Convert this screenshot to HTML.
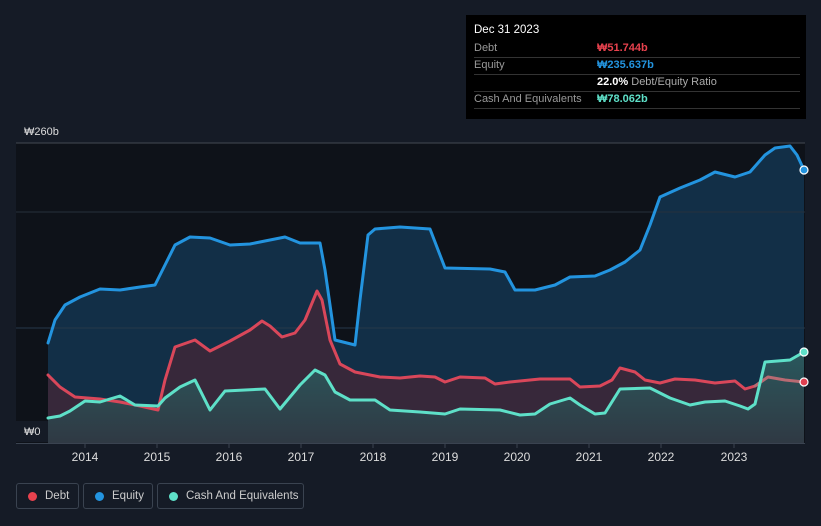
<!DOCTYPE html>
<html><head><meta charset="utf-8"><style>
body{margin:0;background:#151b26;width:821px;height:526px;overflow:hidden;font-family:"Liberation Sans","Noto Sans CJK KR",sans-serif;}
.tt{position:absolute;left:466px;top:15px;width:340px;height:104px;background:#000;color:#fff;font-size:11px;}
.tt .r{position:absolute;left:8px;right:6px;height:17px;line-height:17px;border-bottom:1px solid #333;white-space:nowrap;}
.tt .v{position:absolute;left:123px;font-weight:bold;}
.lab{color:#999;}
.leg{position:absolute;top:483px;height:26px;border:1px solid #3a4350;border-radius:3px;color:#ccc;font-size:11.5px;line-height:24px;box-sizing:border-box;white-space:nowrap;}
.leg i{position:absolute;left:11px;top:8px;width:9px;height:9px;border-radius:50%;}
.leg span{position:absolute;left:28px;}
</style></head><body>
<svg width="821" height="526" style="position:absolute;left:0;top:0">
<defs>
<linearGradient id="cg" x1="0" y1="0" x2="0" y2="1"><stop offset="0" stop-color="#2b5a5e"/><stop offset="1" stop-color="#2f3a44"/></linearGradient>
</defs>
<rect x="16" y="143" width="789" height="300" fill="#0e1219"/>
<polygon fill="#122f47" points="48,443 48,343 55,320 65,305 80,297 100,289 120,290 140,287 155,285 165,265 175,245 190,237 210,238 230,245 250,244 270,240 285,237 300,243 320,243 325,270 335,340 355,345 360,300 368,235 375,229 400,227 430,229 440,255 445,268 490,269 505,272 515,290 535,290 555,285 570,277 595,276 610,270 625,262 640,250 650,225 660,197 680,188 700,180 715,172 735,177 750,172 765,155 775,148 790,146 797,155 804,170 804,443"/>
<line x1="16" y1="143" x2="805" y2="143" stroke="#444a52"/>
<line x1="16" y1="212" x2="805" y2="212" stroke="#26303c"/>
<line x1="16" y1="328" x2="805" y2="328" stroke="#26384a"/>
<polygon fill="#37283a" points="48,443 48,375 60,387 75,397 100,399 120,402 140,406 158,410 165,380 175,347 195,340 210,351 230,341 250,330 262,321 270,326 282,337 295,333 305,320 317,291 322,300 330,340 340,364 355,372 380,377 400,378 420,376 435,377 445,382 460,377 485,378 495,384 510,382 540,379 570,379 580,387 600,386 612,380 620,368 635,372 645,380 660,383 675,379 695,380 715,383 735,381 745,389 755,386 768,377 785,380 804,382 804,443"/>
<polygon fill="url(#cg)" opacity="0.95" points="48,443 48,418 60,416 70,411 85,401 100,402 120,396 135,405 158,406 165,398 180,387 195,380 210,410 225,391 265,389 280,409 300,385 315,370 325,375 335,392 350,400 375,400 390,410 420,412 445,414 460,409 500,410 520,415 535,414 550,404 570,398 580,405 595,414 605,413 620,389 650,388 670,398 690,405 705,402 725,401 740,406 748,409 755,404 765,362 790,360 804,352 804,443"/>
<g fill="none" stroke-width="3" stroke-linejoin="round" stroke-linecap="round">
<polyline stroke="#2394df" points="48,343 55,320 65,305 80,297 100,289 120,290 140,287 155,285 165,265 175,245 190,237 210,238 230,245 250,244 270,240 285,237 300,243 320,243 325,270 335,340 355,345 360,300 368,235 375,229 400,227 430,229 440,255 445,268 490,269 505,272 515,290 535,290 555,285 570,277 595,276 610,270 625,262 640,250 650,225 660,197 680,188 700,180 715,172 735,177 750,172 765,155 775,148 790,146 797,155 804,170"/>
<polyline stroke="#d9475a" points="48,375 60,387 75,397 100,399 120,402 140,406 158,410 165,380 175,347 195,340 210,351 230,341 250,330 262,321 270,326 282,337 295,333 305,320 317,291 322,300 330,340 340,364 355,372 380,377 400,378 420,376 435,377 445,382 460,377 485,378 495,384 510,382 540,379 570,379 580,387 600,386 612,380 620,368 635,372 645,380 660,383 675,379 695,380 715,383 735,381 745,389 755,386"/>
<polyline stroke="#b86a72" points="755,386 768,377 785,380 804,382"/>
<polyline stroke="#5ee0c8" points="48,418 60,416 70,411 85,401 100,402 120,396 135,405 158,406 165,398 180,387 195,380 210,410 225,391 265,389 280,409 300,385 315,370 325,375 335,392 350,400 375,400 390,410 420,412 445,414 460,409 500,410 520,415 535,414 550,404 570,398 580,405 595,414 605,413 620,389 650,388 670,398 690,405 705,402 725,401 740,406 748,409 755,404 765,362 790,360 804,352"/>
</g>
<circle cx="804" cy="170" r="4" fill="#2394df" stroke="#fff" stroke-width="1.2"/>
<circle cx="804" cy="352" r="4" fill="#5ee0c8" stroke="#fff" stroke-width="1.2"/>
<circle cx="804" cy="382" r="4" fill="#e04050" stroke="#fff" stroke-width="1.2"/>
<line x1="16" y1="443.5" x2="805" y2="443.5" stroke="#3a4350"/>
<g stroke="#3a4350"><line x1="85" y1="443" x2="85" y2="448"/><line x1="157" y1="443" x2="157" y2="448"/><line x1="229" y1="443" x2="229" y2="448"/><line x1="301" y1="443" x2="301" y2="448"/><line x1="373" y1="443" x2="373" y2="448"/><line x1="445" y1="443" x2="445" y2="448"/><line x1="517" y1="443" x2="517" y2="448"/><line x1="589" y1="443" x2="589" y2="448"/><line x1="661" y1="443" x2="661" y2="448"/><line x1="734" y1="443" x2="734" y2="448"/></g>
<rect x="16" y="421" width="32" height="21" fill="#151b26"/>
<g font-size="12" fill="#ddd" font-family="Liberation Sans,Noto Sans CJK KR,sans-serif" text-anchor="middle">
<text x="85" y="461">2014</text><text x="157" y="461">2015</text><text x="229" y="461">2016</text><text x="301" y="461">2017</text><text x="373" y="461">2018</text><text x="445" y="461">2019</text><text x="517" y="461">2020</text><text x="589" y="461">2021</text><text x="661" y="461">2022</text><text x="734" y="461">2023</text>
<text x="24" y="435" text-anchor="start" font-size="11">₩0</text>
<text x="24" y="135" text-anchor="start" font-size="11">₩260b</text>
</g>
</svg>
<div class="tt">
<div style="position:absolute;left:8px;top:9px;font-size:11.5px">Dec 31 2023</div>
<div class="r" style="top:25px"><span class="lab">Debt</span><span class="v" style="color:#e8424e">₩51.744b</span></div>
<div class="r" style="top:42px"><span class="lab">Equity</span><span class="v" style="color:#2394df">₩235.637b</span></div>
<div class="r" style="top:59px"><span class="v">22.0% <span style="color:#aaa;font-weight:normal">Debt/Equity Ratio</span></span></div>
<div class="r" style="top:76px"><span class="lab">Cash And Equivalents</span><span class="v" style="color:#5ee0c8">₩78.062b</span></div>
</div>
<div class="leg" style="left:16px;width:63px"><i style="background:#e8424e"></i><span>Debt</span></div>
<div class="leg" style="left:83px;width:70px"><i style="background:#2394df"></i><span>Equity</span></div>
<div class="leg" style="left:157px;width:147px"><i style="background:#5ee0c8"></i><span>Cash And Equivalents</span></div>
</body></html>
